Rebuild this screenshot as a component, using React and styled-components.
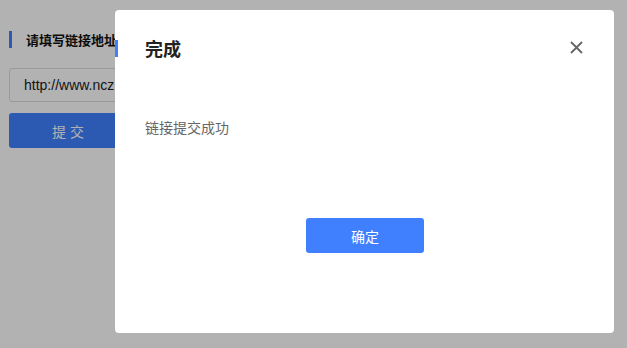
import React from "react";
import styled, { createGlobalStyle } from "styled-components";

const Global = createGlobalStyle`
  html, body { margin: 0; padding: 0; background: #fff; }
  body { font-family: "Liberation Sans", "Noto Sans CJK SC", sans-serif; width: 627px; height: 348px; overflow: hidden; }
`;

const Page = styled.div`
  padding: 31px 9px 0 9px;
  display: flex;
  flex-direction: column;
`;

const Heading = styled.div`
  display: flex;
  align-items: center;
  height: 17px;
  border-left: 3px solid #4080ff;
  padding-left: 14px;
  font-size: 13px;
  font-weight: bold;
  color: #111;
`;

const Input = styled.div`
  margin-top: 20px;
  height: 34px;
  box-sizing: border-box;
  border: 1px solid #dcdcdc;
  border-radius: 3px;
  padding-left: 14px;
  display: flex;
  align-items: center;
  font-size: 14px;
  color: #222;
  width: 300px;
`;

const SubmitButton = styled.button`
  margin-top: 11px;
  height: 35px;
  width: 300px;
  border: none;
  border-radius: 3px;
  background: #4080ff;
  color: #fff;
  font-family: inherit;
  font-size: 14px;
  letter-spacing: 4px;
  text-align: left;
  padding: 0 0 0 43px;
`;

const Overlay = styled.div`
  position: fixed;
  inset: 0;
  background: rgba(0, 0, 0, 0.3);
`;

const Modal = styled.div`
  position: fixed;
  left: 115px;
  top: 10px;
  width: 499px;
  height: 323px;
  background: #fff;
  border-radius: 4px;
  display: flex;
  flex-direction: column;
  box-sizing: border-box;
  padding: 0 30px;
`;

const AccentBar = styled.div`
  position: absolute;
  left: 0;
  top: 30px;
  width: 3px;
  height: 17px;
  background: #4080ff;
`;

const Header = styled.div`
  display: flex;
  align-items: center;
  justify-content: space-between;
  height: 76px;
`;

const Title = styled.div`
  font-size: 18px;
  font-weight: bold;
  color: #222;
`;

const Close = styled.button`
  border: none;
  background: none;
  padding: 0;
  margin: -2px -1px 0 0;
  width: 18px;
  height: 18px;
  display: flex;
  align-items: center;
  justify-content: center;
  cursor: pointer;
`;

const Message = styled.div`
  margin-top: 31px;
  font-size: 14px;
  color: #666;
`;

const Footer = styled.div`
  display: flex;
  justify-content: center;
  margin-top: 81px;
`;

const OkButton = styled.button`
  width: 118px;
  height: 35px;
  border: none;
  border-radius: 3px;
  background: #4080ff;
  color: #fff;
  font-family: inherit;
  font-size: 14px;
  margin-left: 1px;
`;

export default function App() {
  return (
    <>
      <Global />
      <Page>
        <Heading>请填写链接地址</Heading>
        <Input>http://www.ncz.com</Input>
        <SubmitButton>提交</SubmitButton>
      </Page>
      <Overlay />
      <Modal>
        <AccentBar />
        <Header>
          <Title>完成</Title>
          <Close aria-label="close">
            <svg width="13" height="13" viewBox="0 0 13 13">
              <path d="M1 1L12 12M12 1L1 12" stroke="#666" strokeWidth="1.8" />
            </svg>
          </Close>
        </Header>
        <Message>链接提交成功</Message>
        <Footer>
          <OkButton>确定</OkButton>
        </Footer>
      </Modal>
    </>
  );
}
